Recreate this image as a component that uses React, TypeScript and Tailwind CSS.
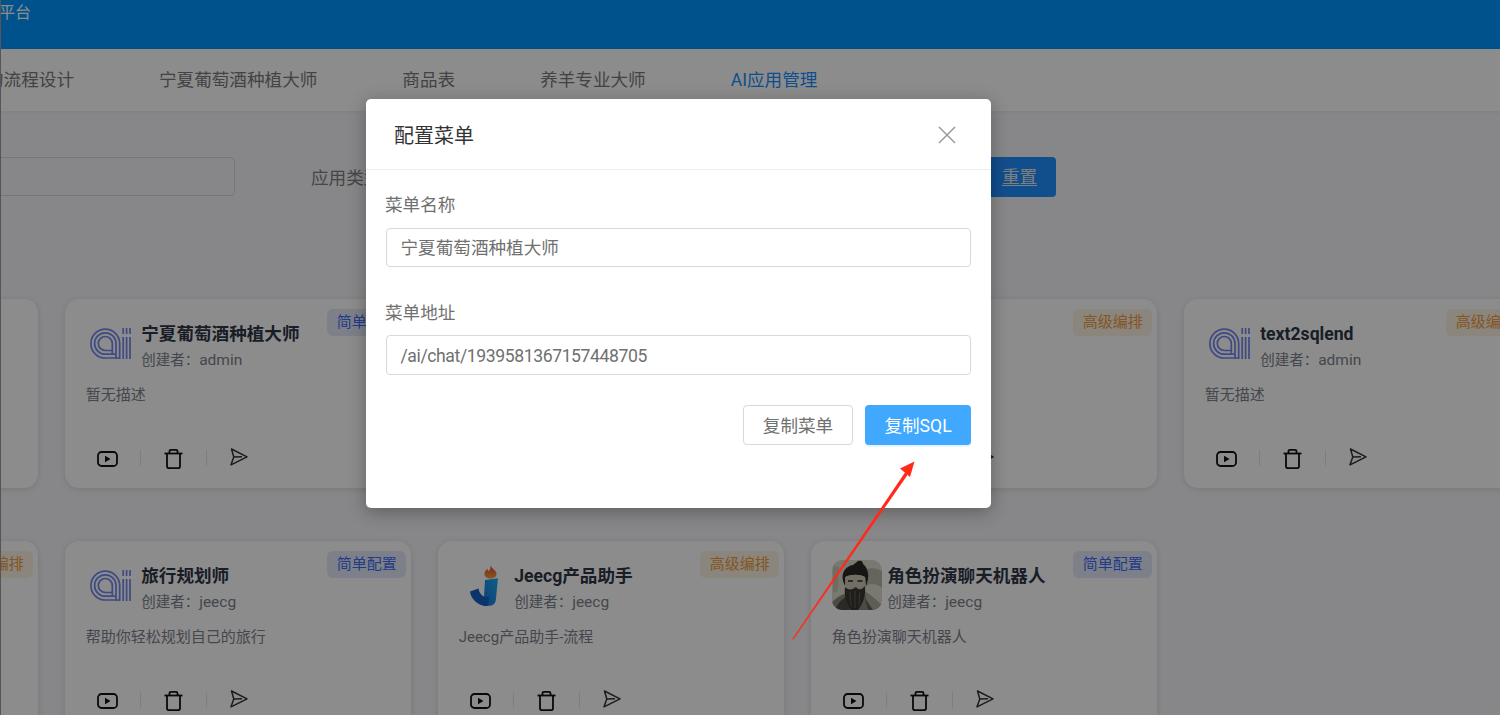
import { ReactNode } from "react";

const FONT = "font-['Roboto','Noto_Sans_CJK_SC',sans-serif]";

function AiLogo() {
  return (
    <svg width="41" height="31" viewBox="0 0 41 31" fill="none" stroke="#7488ee" strokeWidth="1.7">
      <path d="M29.7 31V15.500A14.400 14.400 0 1 0 15.300 30H29.700" />
      <path d="M26 31V15.500A10.700 10.700 0 1 0 15.300 26.200H26" />
      <path d="M22.300 27V15.500A7 7 0 1 0 15.300 22.500H22.300" />
      <path d="M33.200 31V9M36.600 31V9M40 31V9" />
      <path d="M33.200 6V0M36.600 6V0M40 6V0" />
    </svg>
  );
}

function JeecgLogo() {
  return (
    <svg width="28" height="41" viewBox="0 0 28 41">
      <defs>
        <linearGradient id="jb" x1="0" y1="1" x2="1" y2="0">
          <stop offset="0" stopColor="#1570e0" />
          <stop offset="1" stopColor="#1fb0f0" />
        </linearGradient>
        <linearGradient id="fl" x1="0" y1="1" x2="0" y2="0">
          <stop offset="0" stopColor="#f0a040" />
          <stop offset="1" stopColor="#ee3f28" />
        </linearGradient>
      </defs>
      <path d="M20.500 0c0 3 6 5 6 9 0 3-2.800 4.500-6 4.500S14.500 12 14.500 9c0-2.500 1.500-4 2.800-5.500.2 1.500.6 2.300 1.200 2.500C20 5.500 20.800 3 20.500 0z" fill="url(#fl)" />
      <path d="M15 15l13-1.700-2.200 22c-.3 3-2.500 5.200-6 5.400l-6.300.3z" fill="url(#jb)" />
      <path d="M0 26.500l8.500-3c.8 4.500 3.500 8 7 8.500 1.500.2 3.500-.5 3.500-.5l-1 9c-1 .7-2.300.7-3.300.5C7 39.500 1 34 0 26.500z" fill="#1460c4" />
    </svg>
  );
}

function Portrait() {
  return (
    <svg width="50" height="50" viewBox="0 0 50 50" className="rounded-[10px]">
      <rect width="50" height="50" fill="#dedccd" />
      <path d="M33 10c6-3 12-2 17 1v17c-5-4-10-5-15-3z" fill="#bab9aa" />
      <path d="M1 6l6 1-1 24-5 2z" fill="#c8c6b7" />
      <path d="M0 50V42c5-5 11-8 15-9l18-1c6 3 12 8 17 14v4z" fill="#8b887a" />
      <path d="M33 31l17 14v5H36z" fill="#aeac9d" />
      <path d="M3 50c3-7 7-11 12-14l3 14z" fill="#4e4c43" />
      <path d="M33 38l8 12h-5z" fill="#5f5d52" />
      <path d="M11 21c-2-9 3-15 10-16l5-4c3-1 5 0 5 3 4 3 6 9 5 15l-2 8-1-10c-6-3-13-3-19 0l-1 9z" fill="#2a2925" />
      <path d="M13 17c6-3 14-3 20 0 1 7 0 12-3 16H17c-3-4-4-9-4-16z" fill="#cfc9b7" />
      <path d="M13 27c2 2 5 3 7 2 3-1 5-1 7 0 2 1 4-1 6-3 1 9-2 18-7 24h-7c-5-7-7-15-6-23z" fill="#3a3830" />
      <path d="M18 32l1 14M23 31v17M28 32l-1 13" stroke="#6e6b5f" strokeWidth=".8" fill="none" />
      <path d="M16 21h5M25.500 21h5" stroke="#2a2925" strokeWidth="1.400" />
      <path d="M22 28h3" stroke="#2a2925" strokeWidth="1" />
    </svg>
  );
}

function PlayIcon() {
  return (
    <svg width="21" height="16" viewBox="0 0 21 16" fill="none" className="shrink-0">
      <rect x="1" y="1" width="19" height="14" rx="3.500" stroke="#111" strokeWidth="1.800" />
      <path d="M8 4.800 13.500 8 8 11.200z" fill="#111" />
    </svg>
  );
}

function TrashIcon() {
  return (
    <svg width="19" height="20" viewBox="0 0 19 20" fill="none" stroke="#111" strokeWidth="1.800" className="shrink-0">
      <path d="M.5 4.500h18" />
      <path d="M5.500 4.500V2.300C5.500 1.400 6.100.9 7 .9h5c.9 0 1.500.5 1.500 1.400v2.200" />
      <path d="M3 4.500v12.700c0 1.200.7 1.900 1.900 1.900h9.200c1.200 0 1.900-.7 1.900-1.900V4.500" />
    </svg>
  );
}

function SendIcon() {
  return (
    <svg width="18" height="18" viewBox="0 0 18 18" fill="none" stroke="#333" strokeWidth="1.500" strokeLinejoin="round" className="shrink-0">
      <path d="M1.500 1 17 8.800 1 16.800 3.800 9z" />
      <path d="M3.800 9 12 8.800" />
    </svg>
  );
}

type CardProps = {
  logo?: ReactNode;
  name?: string;
  author?: string;
  desc?: string;
  tag?: "simple" | "advanced";
};

function Card({ logo, name, author, desc, tag }: CardProps) {
  return (
    <div className="relative h-[189px] rounded-[14px] bg-white pt-[19px] pl-[21px] shadow-[0_1px_6px_rgba(0,0,0,0.12)]">
      {tag === "simple" && (
        <span className="absolute top-[10px] right-[5px] flex h-[27px] w-[79px] items-center justify-center rounded-[6px] bg-[#e6eafa] text-[15px] text-[#3f6cf5]">
          简单配置
        </span>
      )}
      {tag === "advanced" && (
        <span className="absolute top-[10px] right-[5px] flex h-[27px] w-[79px] items-center justify-center rounded-[6px] bg-[#fbf2e4] text-[15px] text-[#f29c3c]">
          高级编排
        </span>
      )}
      <div className="flex h-[50px] gap-[5.500px]">
        <div className="flex w-[50px] shrink-0 items-center justify-center">{logo}</div>
        <div className="flex flex-col pt-[3px]">
          <span className="text-[17.600px] leading-[26px] font-bold text-[#2f3646]">{name}</span>
          {author && (
            <span className="mt-[1px] text-[14.500px] leading-[24px] text-[#7d828c]">
              创建者：<span className="text-[15.500px]">{author}</span>
            </span>
          )}
        </div>
      </div>
      <p className="mt-[16px] h-[22px] text-[15px] leading-[22px] text-[#7d828c]">{desc}</p>
      <div className="mt-[40px] flex h-[24px] items-center">
        <span className="mt-[1px] ml-[11px]"><PlayIcon /></span>
        <span className="ml-[22px] h-[16px] w-px bg-[#e5e5e5]" />
        <span className="mt-[1px] ml-[23px]"><TrashIcon /></span>
        <span className="ml-[23px] h-[16px] w-px bg-[#e5e5e5]" />
        <span className="-mt-[3px] ml-[23.500px]"><SendIcon /></span>
      </div>
    </div>
  );
}

export default function App() {
  return (
    <div className={`relative h-[715px] w-[1500px] overflow-hidden border-l border-[#555] bg-[#f6f6fa] ${FONT}`}>
      <header className="h-[49px] bg-[#0095ff] text-[16px] leading-[25px] text-white">
        <span className="-ml-[2px]">平台</span>
      </header>
      <nav className="flex h-[62px] items-center gap-[85px] bg-white text-[17.600px] text-[#7a7a7a] shadow-[0_1px_4px_rgba(0,0,0,0.06)]">
        <span className="-ml-[15px]">的流程设计</span>
        <span>宁夏葡萄酒种植大师</span>
        <span>商品表</span>
        <span>养羊专业大师</span>
        <span className="text-[#1890ff]">AI应用管理</span>
      </nav>
      <div className="mt-[46px] flex h-[40px] items-start text-[17.600px] text-[#808080]">
        <div className="-ml-[66px] h-[39px] w-[300px] rounded-[4px] border border-[#d9d9d9]" />
        <span className="ml-[76px] leading-[42px]">应用类型</span>
        <button className="ml-[601.600px] h-[40px] w-[73px] rounded-[4px] bg-[#1f8fff] text-[#e8e8e8] underline underline-offset-2">
          重置
        </button>
      </div>
      <div className="mt-[102px] -ml-[309.300px] grid grid-cols-[repeat(5,346.67px)] gap-x-[26.33px] gap-y-[53px]">
        <Card />
        <Card logo={<AiLogo />} name="宁夏葡萄酒种植大师" author="admin" desc="暂无描述" tag="simple" />
        <Card />
        <Card tag="advanced" />
        <Card logo={<AiLogo />} name="text2sqlend" author="admin" desc="暂无描述" tag="advanced" />
        <Card tag="advanced" />
        <Card logo={<AiLogo />} name="旅行规划师" author="jeecg" desc="帮助你轻松规划自己的旅行" tag="simple" />
        <Card logo={<JeecgLogo />} name="Jeecg产品助手" author="jeecg" desc="Jeecg产品助手-流程" tag="advanced" />
        <Card logo={<Portrait />} name="角色扮演聊天机器人" author="jeecg" desc="角色扮演聊天机器人" tag="simple" />
      </div>

      <div className="absolute inset-0 bg-black/45">
        <div className="mt-[99px] ml-[365px] h-[409px] w-[625px] rounded-[5px] bg-white shadow-[0_4px_18px_rgba(0,0,0,0.3)]">
          <div className="flex h-[71px] items-center justify-between border-b border-[#eeeeee] pt-[3px] pr-[35px] pl-[28px]">
            <span className="text-[20px] text-[#333]">配置菜单</span>
            <svg width="18" height="18" viewBox="0 0 18 18" stroke="#999" strokeWidth="1.500" className="-mt-[2px]">
              <path d="M1 1l16 16M17 1 1 17" />
            </svg>
          </div>
          <div className="px-[20px] text-[17.600px] text-[#707070]">
            <div className="-ml-px pt-[21px] leading-[28px]">菜单名称</div>
            <div className="mt-[9px] flex h-[39px] items-center rounded-[4px] border border-[#d9d9d9] pt-[2px] pl-[13.500px]">
              宁夏葡萄酒种植大师
            </div>
            <div className="mt-[32px] -ml-px leading-[28px]">菜单地址</div>
            <div className="mt-[8px] flex h-[40px] items-center rounded-[4px] border border-[#d9d9d9] pt-[2px] pl-[13.500px] tracking-[-0.4px]">
              /ai/chat/1939581367157448705
            </div>
            <div className="mt-[30px] flex justify-end gap-[12px]">
              <button className="h-[40px] w-[110px] rounded-[4px] border border-[#d9d9d9] pt-[2px]">复制菜单</button>
              <button className="h-[40px] w-[106px] rounded-[4px] bg-[#40a9ff] pt-[2px] text-white shadow-[0_2px_0_rgba(5,145,255,0.1)]">
                复制SQL
              </button>
            </div>
          </div>
        </div>
      </div>

      {/* annotation arrow drawn over the modal */}
      <svg className="absolute top-0 -left-px" width="1500" height="715" viewBox="0 0 1500 715" fill="#ff2a1a">
        <path d="M792.300 639 793.300 639.700 907.800 474.500 905 472.500z" />
        <path d="M914.500 461.500 900 468.500 910 477z" />
      </svg>
    </div>
  );
}
